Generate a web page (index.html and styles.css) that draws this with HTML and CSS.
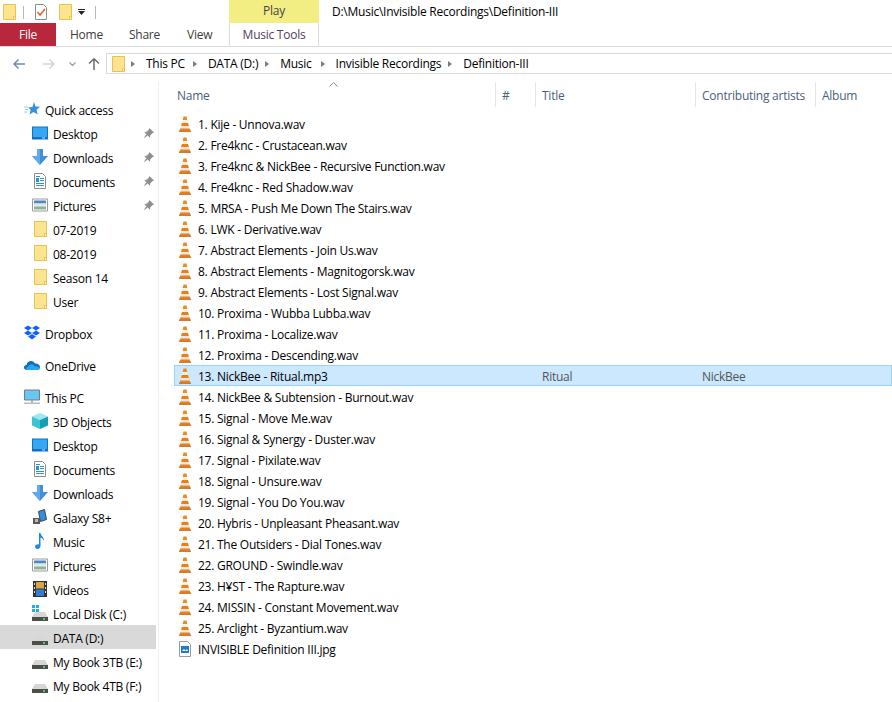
FILE: index.html
```html
<!DOCTYPE html>
<html lang="en">
<head>
  <meta charset="UTF-8">
  <title>Definition-III</title>
  <link rel="stylesheet" href="styles.css">
</head>
<body>
  <svg class="defs" width="0" height="0">
    <symbol id="folder" viewBox="0 0 16 16">
      <path d="M2.500 .5h12v15h-12z" fill="#fde58f" stroke="#e9c24f"/>
      <path d="M12.500 15.500v-3h2v3z" fill="#fff3c4" stroke="#e9c24f"/>
    </symbol>
    <symbol id="vlc" viewBox="0 0 12 16">
      <path d="M4.500 .5h3l.8 3.500H3.700z" fill="#ee8a1e"/>
      <path d="M3.700 4h4.600l.8 3H2.900z" fill="#f4f0ea"/>
      <path d="M2.900 7h6.200l.8 3H2.100z" fill="#ef7d14"/>
      <path d="M2.100 10h7.800l.7 3H1.400z" fill="#ece7e1"/>
      <path d="M1.400 12.500h9.200L12 15.500H0z" fill="#e8811c"/>
      <path d="M0 14.800h12v1H0z" fill="#c8682a"/>
    </symbol>
    <symbol id="desktop" viewBox="0 0 16 13">
      <path d="M0 0h16v13H0z" fill="#0a74c9"/>
      <path d="M1 1h14v10H1z" fill="#36a7f0"/>
      <path d="M1 11h14v1H1z" fill="#0b5fa8"/>
      <path d="M10 11h3v1h-3z" fill="#cfe8fa"/>
    </symbol>
    <symbol id="downloads" viewBox="0 0 16 16">
      <path d="M5 0h6v7h5l-8 9-8-9h5z" fill="#3f8fdc"/>
      <path d="M5 0h3v16l-8-9h5z" fill="#62a9ea"/>
    </symbol>
    <symbol id="documents" viewBox="0 0 16 16">
      <path d="M2.500 .5h8l3 3v12h-11z" fill="#fff" stroke="#8d8d8d"/>
      <path d="M4 3h4v1H4zM8 5h4v1H8zM4 5h3v4H4zM8 7h4v1H8zM4 10h8v1H4zM4 12h8v1H4z" fill="#2f94dd"/>
    </symbol>
    <symbol id="pictures" viewBox="0 0 16 13">
      <path d="M.5 .5h15v12H.5z" fill="#fff" stroke="#9a9a9a"/>
      <path d="M2 2h12v3H2z" fill="#4f86c0"/>
      <path d="M2 5h12v3H2z" fill="#dbe8ea"/>
      <path d="M2 8h12v3H2z" fill="#8fb293"/>
    </symbol>
    <symbol id="pin" viewBox="0 0 12 12">
      <path d="M7 0l5 5-1.500 .5L8 8l-.5 2.500L1.500 4.500 4 4l2.500-2.500zM3.500 7L.5 11.500 5 8.500z" fill="#8b8f94"/>
    </symbol>
    <symbol id="drive" viewBox="0 0 16 9">
      <path d="M3 0h10l3 5H0z" fill="#d6d6d6"/>
      <path d="M0 5h16v4H0z" fill="#4d4d4d"/>
      <path d="M11 6h2v2h-2z" fill="#54c45e"/>
    </symbol>
  </svg>

  <header class="ribbon">
    <div class="title-row">
      <div class="qat">
        <svg class="qat-folder"><use href="#folder"/></svg>
        <span class="qat-sep"></span>
        <svg class="qat-check" viewBox="0 0 14 16">
          <path d="M1.500 .5h8l3 3v12h-11z" fill="#fff" stroke="#8d8d8d"/>
          <path d="M3.500 8l2.500 3 5-6" fill="none" stroke="#e2622a" stroke-width="1.500"/>
        </svg>
        <svg class="qat-folder second"><use href="#folder"/></svg>
        <svg class="qat-drop" viewBox="0 0 7 6"><path d="M0 0h7v1H0zM0 2h7L3.500 6z" fill="#222"/></svg>
        <span class="qat-sep"></span>
      </div>
      <div class="play">Play</div>
      <div class="win-title">D:\Music\Invisible Recordings\Definition-III</div>
    </div>
    <nav class="tabs">
      <span class="tab-file">File</span>
      <span class="tab tab-home">Home</span>
      <span class="tab tab-share">Share</span>
      <span class="tab tab-view">View</span>
      <span class="tab tab-music">Music Tools</span>
    </nav>
  </header>

  <div class="addr-row">
    <div class="nav-btns">
      <svg class="nav-ico back" viewBox="0 0 12 10"><path d="M5.500 .5L1 5l4.500 4.500M1 5h11" fill="none" stroke="#6b8cb0" stroke-width="1.500"/></svg>
      <svg class="nav-ico fwd" viewBox="0 0 12 10"><path d="M6.500 .5L11 5 6.500 9.500M11 5H0" fill="none" stroke="#d4d4d4" stroke-width="1.500"/></svg>
      <svg class="nav-drop" viewBox="0 0 7 4"><path d="M.5 .5L3.500 3.500 6.500 .5" fill="none" stroke="#9a9a9a" stroke-width="1.200"/></svg>
      <svg class="nav-ico up" viewBox="0 0 12 12"><path d="M1 5.500L6 .8l5 4.700M6 1v11" fill="none" stroke="#6d6d6d" stroke-width="1.500"/></svg>
    </div>
    <div class="addr">
      <svg class="addr-folder"><use href="#folder"/></svg>
      <span class="crumb c1">This PC</span>
      <span class="crumb c2">DATA (D:)</span>
      <span class="crumb c3">Music</span>
      <span class="crumb c4">Invisible Recordings</span>
      <span class="crumb c5">Definition-III</span>
    </div>
  </div>

  <div class="panes">
    <aside class="side">
      <div class="item top">
        <svg class="ico" viewBox="0 0 16 16"><path d="M10 1l1.500 4.500 4.500.3-3.500 3 1.200 4.700L9.500 11l-4 2.500 1.200-4.700-2.700-2.300 4.500-.5z" fill="#2f8fe0"/><path d="M0 6h4M1 8.500h3M0 11h3" stroke="#9cc8ee"/></svg>
        Quick access
      </div>
      <div class="item sub"><svg class="ico"><use href="#desktop"/></svg>Desktop<svg class="pin"><use href="#pin"/></svg></div>
      <div class="item sub"><svg class="ico"><use href="#downloads"/></svg>Downloads<svg class="pin"><use href="#pin"/></svg></div>
      <div class="item sub"><svg class="ico"><use href="#documents"/></svg>Documents<svg class="pin"><use href="#pin"/></svg></div>
      <div class="item sub"><svg class="ico"><use href="#pictures"/></svg>Pictures<svg class="pin"><use href="#pin"/></svg></div>
      <div class="item sub"><svg class="ico"><use href="#folder"/></svg>07-2019</div>
      <div class="item sub"><svg class="ico"><use href="#folder"/></svg>08-2019</div>
      <div class="item sub"><svg class="ico"><use href="#folder"/></svg>Season 14</div>
      <div class="item sub"><svg class="ico"><use href="#folder"/></svg>User</div>

      <div class="item top gap">
        <svg class="ico" viewBox="0 0 16 15"><path d="M4 0l4 2.500L4 5 0 2.500zM12 0l4 2.500L12 5 8 2.500zM4 5l4 2.500L4 10 0 7.500zM12 5l4 2.500L12 10 8 7.500zM8 8.500l4 2.500-4 3-4-3z" fill="#0f62fe"/></svg>
        Dropbox
      </div>
      <div class="item top gap">
        <svg class="ico" viewBox="0 0 16 11"><path d="M3 10.500C1 10.500 0 9.300 0 8c0-1.500 1-2.500 2.500-2.600C3 3 5 1.500 7 1.500c1.800 0 3.200 1 3.900 2.500 2.800-.4 5.100 1.500 5.100 3.800 0 1.600-1.200 2.700-2.800 2.700z" fill="#0f6cbd"/><path d="M3.500 10.500c-1 0-1.500-.7-1.500-1.400 0-1 .8-1.700 2-1.700.5-1.500 1.800-2.600 3.500-2.600 1.500 0 2.800.9 3.300 2.100 2.300-.3 4.700.9 4.700 2 0 1-.8 1.600-2 1.600z" fill="#28a8ea"/></svg>
        OneDrive
      </div>
      <div class="item top gap">
        <svg class="ico" viewBox="0 0 16 15"><path d="M.5 .5h15v10H.5z" fill="#6cc6f2" stroke="#6d7f8c"/><path d="M7 11h2v2H7z" fill="#9aa7b0"/><path d="M0 13h16v1.500H0z" fill="#b5bdc4"/></svg>
        This PC
      </div>
      <div class="item sub">
        <svg class="ico" viewBox="0 0 16 16"><path d="M8 0l8 3.500L8 7 0 3.500z" fill="#9ce8ee"/><path d="M0 3.500L8 7v9l-8-3.500z" fill="#3cc4d2"/><path d="M16 3.500L8 7v9l8-3.500z" fill="#159fb4"/></svg>
        3D Objects
      </div>
      <div class="item sub"><svg class="ico"><use href="#desktop"/></svg>Desktop</div>
      <div class="item sub"><svg class="ico"><use href="#documents"/></svg>Documents</div>
      <div class="item sub"><svg class="ico"><use href="#downloads"/></svg>Downloads</div>
      <div class="item sub">
        <svg class="ico" viewBox="0 0 16 16"><path d="M6.500 2.500l6-2 2 10-6 2z" fill="#2f8fe0" stroke="#444"/><path d="M1 9h7v6H1z" fill="#5a5a5a"/><path d="M3 10h3v3H3z" fill="#bbb"/></svg>
        Galaxy S8+
      </div>
      <div class="item sub">
        <svg class="ico" viewBox="0 0 16 16"><path d="M7 0h1.500c.3 3 4 4 3.500 8-.6-2-2-3-3.500-3.200V13c0 1.800-1.600 3-3.200 3C4 16 3 15 3 13.800c0-1.500 1.500-2.700 4-2.400z" fill="#1e88e5"/></svg>
        Music
      </div>
      <div class="item sub"><svg class="ico"><use href="#pictures"/></svg>Pictures</div>
      <div class="item sub">
        <svg class="ico" viewBox="0 0 16 16"><path d="M1 0h14v16H1z" fill="#333"/><path d="M4 1h8v6.500H4z" fill="#d9a441"/><path d="M4 8.500h8V15H4z" fill="#2f7fd1"/><path d="M2 2h1v2H2zM2 6h1v2H2zM2 10h1v2H2zM13 2h1v2h-1zM13 6h1v2h-1zM13 10h1v2h-1z" fill="#ddd"/></svg>
        Videos
      </div>
      <div class="item sub">
        <svg class="ico" viewBox="0 0 16 16"><path d="M0 0h3v3H0zM4 0h3v3H4zM0 4h3v3H0zM4 4h3v3H4z" fill="#1faee9"/><use href="#drive" y="7" width="16" height="9"/></svg>
        Local Disk (C:)
      </div>
      <div class="item sub sel"><svg class="ico drive"><use href="#drive"/></svg>DATA (D:)</div>
      <div class="item sub"><svg class="ico drive"><use href="#drive"/></svg>My Book 3TB (E:)</div>
      <div class="item sub"><svg class="ico drive"><use href="#drive"/></svg>My Book 4TB (F:)</div>
    </aside>

    <main class="files">
      <div class="head">
        <svg class="sort" viewBox="0 0 9 5"><path d="M.5 4.500l4-4 4 4" fill="none" stroke="#8a8a8a"/></svg>
        <span class="hcol hname">Name</span>
        <span class="hcol hnum">#</span>
        <span class="hcol htitle">Title</span>
        <span class="hcol hart">Contributing artists</span>
        <span class="hcol halb">Album</span>
      </div>
      <div class="list">
        <div class="row"><svg class="vlc"><use href="#vlc"/></svg><span class="name">1. Kije - Unnova.wav</span></div>
        <div class="row"><svg class="vlc"><use href="#vlc"/></svg><span class="name">2. Fre4knc - Crustacean.wav</span></div>
        <div class="row"><svg class="vlc"><use href="#vlc"/></svg><span class="name">3. Fre4knc &amp; NickBee - Recursive Function.wav</span></div>
        <div class="row"><svg class="vlc"><use href="#vlc"/></svg><span class="name">4. Fre4knc - Red Shadow.wav</span></div>
        <div class="row"><svg class="vlc"><use href="#vlc"/></svg><span class="name">5. MRSA - Push Me Down The Stairs.wav</span></div>
        <div class="row"><svg class="vlc"><use href="#vlc"/></svg><span class="name">6. LWK - Derivative.wav</span></div>
        <div class="row"><svg class="vlc"><use href="#vlc"/></svg><span class="name">7. Abstract Elements - Join Us.wav</span></div>
        <div class="row"><svg class="vlc"><use href="#vlc"/></svg><span class="name">8. Abstract Elements - Magnitogorsk.wav</span></div>
        <div class="row"><svg class="vlc"><use href="#vlc"/></svg><span class="name">9. Abstract Elements - Lost Signal.wav</span></div>
        <div class="row"><svg class="vlc"><use href="#vlc"/></svg><span class="name">10. Proxima - Wubba Lubba.wav</span></div>
        <div class="row"><svg class="vlc"><use href="#vlc"/></svg><span class="name">11. Proxima - Localize.wav</span></div>
        <div class="row"><svg class="vlc"><use href="#vlc"/></svg><span class="name">12. Proxima - Descending.wav</span></div>
        <div class="row active"><svg class="vlc"><use href="#vlc"/></svg><span class="name">13. NickBee - Ritual.mp3</span><span class="cell-title">Ritual</span><span class="cell-art">NickBee</span></div>
        <div class="row"><svg class="vlc"><use href="#vlc"/></svg><span class="name">14. NickBee &amp; Subtension - Burnout.wav</span></div>
        <div class="row"><svg class="vlc"><use href="#vlc"/></svg><span class="name">15. Signal - Move Me.wav</span></div>
        <div class="row"><svg class="vlc"><use href="#vlc"/></svg><span class="name">16. Signal &amp; Synergy - Duster.wav</span></div>
        <div class="row"><svg class="vlc"><use href="#vlc"/></svg><span class="name">17. Signal - Pixilate.wav</span></div>
        <div class="row"><svg class="vlc"><use href="#vlc"/></svg><span class="name">18. Signal - Unsure.wav</span></div>
        <div class="row"><svg class="vlc"><use href="#vlc"/></svg><span class="name">19. Signal - You Do You.wav</span></div>
        <div class="row"><svg class="vlc"><use href="#vlc"/></svg><span class="name">20. Hybris - Unpleasant Pheasant.wav</span></div>
        <div class="row"><svg class="vlc"><use href="#vlc"/></svg><span class="name">21. The Outsiders - Dial Tones.wav</span></div>
        <div class="row"><svg class="vlc"><use href="#vlc"/></svg><span class="name">22. GROUND - Swindle.wav</span></div>
        <div class="row"><svg class="vlc"><use href="#vlc"/></svg><span class="name">23. H¥ST - The Rapture.wav</span></div>
        <div class="row"><svg class="vlc"><use href="#vlc"/></svg><span class="name">24. MISSIN - Constant Movement.wav</span></div>
        <div class="row"><svg class="vlc"><use href="#vlc"/></svg><span class="name">25. Arclight - Byzantium.wav</span></div>
        <div class="row">
          <svg class="vlc" viewBox="1 0 12 16"><path d="M1.500 .5h8l3 3v12h-11z" fill="#fff" stroke="#9a9a9a"/><path d="M3 5h8v7H3z" fill="#1f78d1"/><path d="M4 10l2-2 1.500 1.500L9 8l1 2z" fill="#fff"/></svg>
          <span class="name">INVISIBLE Definition III.jpg</span>
        </div>
      </div>
    </main>
  </div>
</body>
</html>
```

FILE: styles.css
```css
html, body {
  margin: 0;
  padding: 0;
}
body {
  width: 892px;
  height: 702px;
  overflow: hidden;
  background-color: #fff;
  color: #000;
  font-family: 'Open Sans', sans-serif;
  font-size: 12px;
  letter-spacing: -0.25px;
}
.defs {
  display: block;
  height: 0;
}

/* ribbon */
.ribbon {
  height: 46px;
  border-bottom: 1px solid #dadbdc;
}
.title-row {
  display: flex;
  height: 23px;
}
.qat {
  width: 229px;
  display: flex;
  align-items: center;
  padding-top: 1px;
  box-sizing: border-box;
}
.qat-folder {
  width: 16px;
  height: 16px;
  margin-left: 1px;
}
.qat-folder.second {
  margin-left: 9px;
}
.qat-sep {
  width: 1px;
  height: 13px;
  background-color: #b9b9b9;
  margin-left: 6px;
}
.qat-check {
  width: 14px;
  height: 16px;
  margin-left: 10px;
}
.qat-drop {
  width: 7px;
  height: 6px;
  margin-left: 5px;
  margin-right: 4px;
}
.play {
  width: 90px;
  background-color: #f2ee84;
  color: #444;
  text-align: center;
  line-height: 21px;
}
.win-title {
  margin-left: 13px;
  line-height: 23px;
}
.tabs {
  display: flex;
  height: 23px;
  color: #3b3b3b;
}
.tab-file {
  width: 56px;
  background-color: #b9273c;
  color: #fff;
  text-align: center;
  line-height: 23px;
}
.tab {
  line-height: 23px;
  white-space: nowrap;
}
.tab-home {
  width: 30px;
  margin-left: 14px;
}
.tab-share {
  width: 29px;
  margin-left: 29px;
}
.tab-view {
  width: 25px;
  margin-left: 29px;
}
.tab-music {
  margin-left: 17px;
  width: 90px;
  box-sizing: border-box;
  text-align: center;
  border-left: 1px solid #dadbdc;
  border-right: 1px solid #dadbdc;
  color: #50405c;
}

/* address bar */
.addr-row {
  display: flex;
  height: 35px;
  box-sizing: border-box;
  padding-top: 6px;
}
.nav-btns {
  width: 106px;
  display: flex;
  align-items: center;
  height: 21px;
}
.nav-ico {
  width: 12px;
  height: 10px;
}
.nav-ico.back {
  margin-left: 13px;
}
.nav-ico.fwd {
  margin-left: 18px;
}
.nav-drop {
  width: 7px;
  height: 4px;
  margin-left: 14px;
}
.nav-ico.up {
  height: 12px;
  margin-left: 12px;
}
.addr {
  flex: 1;
  height: 21px;
  box-sizing: border-box;
  border: 1px solid #d9d9d9;
  border-right: none;
  display: flex;
  align-items: center;
  line-height: 19px;
}
.addr-folder {
  width: 16px;
  height: 16px;
  margin-left: 3px;
}
.crumb {
  position: relative;
}
.crumb.c1 {
  margin-left: 20px;
}
.crumb.c2 {
  margin-left: 23px;
}
.crumb.c3 {
  margin-left: 22px;
}
.crumb.c4 {
  margin-left: 24px;
}
.crumb.c5 {
  margin-left: 22px;
}
.crumb::before {
  content: "";
  position: absolute;
  left: -15px;
  top: 7px;
  border-left: 4px solid #7c7c7c;
  border-top: 3px solid transparent;
  border-bottom: 3px solid transparent;
}

/* panes */
.panes {
  display: flex;
}
.side {
  width: 159px;
  height: 620px;
  box-sizing: border-box;
  border-right: 1px solid #f0f0f0;
  padding-top: 15px;
  flex-shrink: 0;
}
.item {
  position: relative;
  display: flex;
  align-items: center;
  height: 24px;
  box-sizing: border-box;
  padding-top: 2px;
  white-space: nowrap;
  color: #000;
  margin-right: 2px;
}
.item.gap {
  margin-top: 8px;
}
.ico {
  width: 16px;
  height: 16px;
  margin-right: 5px;
  margin-bottom: 2px;
  flex-shrink: 0;
}
.top {
  padding-left: 24px;
}
.sub {
  padding-left: 32px;
}
.ico.drive {
  height: 9px;
  margin-top: 7px;
}
.sel {
  background-color: #d9d9d9;
}
.pin {
  position: absolute;
  left: 143px;
  top: 7px;
  width: 11px;
  height: 11px;
}

/* file list */
.files {
  flex: 1;
  padding-left: 15px;
  min-width: 0;
}
.head {
  position: relative;
  display: flex;
  height: 25px;
  color: #4c607a;
  line-height: 27px;
}
.sort {
  position: absolute;
  left: 155px;
  top: 0;
  width: 9px;
  height: 5px;
}
.hcol {
  box-sizing: border-box;
  padding-left: 6px;
  border-left: 1px solid #e5e5e5;
  flex-shrink: 0;
  white-space: nowrap;
}
.hname {
  width: 321px;
  padding-left: 3px;
  border-left: none;
}
.hnum {
  width: 40px;
}
.htitle {
  width: 160px;
}
.hart {
  width: 120px;
}
.halb {
  width: 77px;
}
.list {
  padding-top: 6px;
}
.row {
  position: relative;
  display: flex;
  align-items: center;
  height: 21px;
  box-sizing: border-box;
  padding-left: 5px;
  white-space: nowrap;
}
.vlc {
  width: 12px;
  height: 16px;
  flex-shrink: 0;
  margin-right: 7px;
}
.name {
  width: 297px;
  flex-shrink: 0;
  padding-top: 1px;
}
.active {
  background-color: #cce8ff;
  border: 1px solid #99d1ff;
  padding-left: 4px;
}
.cell-title {
  width: 160px;
  margin-left: 47px;
  flex-shrink: 0;
  padding-top: 1px;
  color: #555;
}
.cell-art {
  padding-top: 1px;
  color: #555;
}
```
